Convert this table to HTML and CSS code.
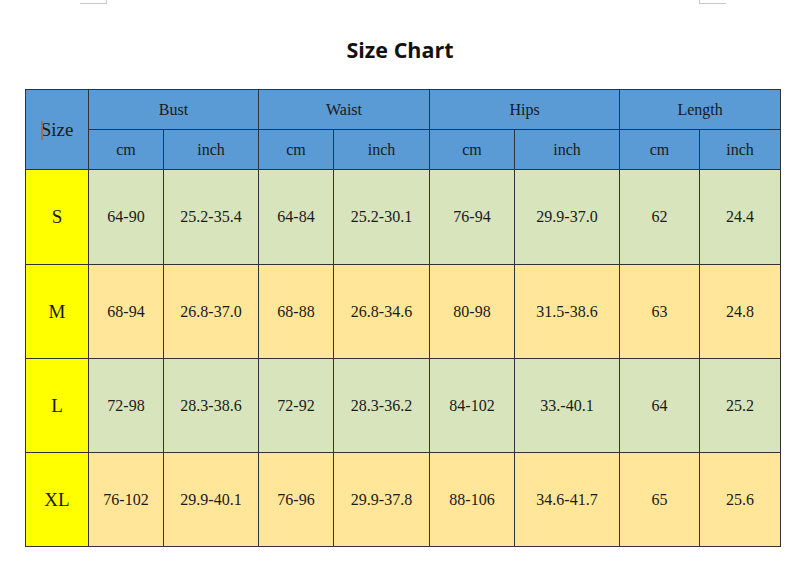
FILE: index.html
```html
<!DOCTYPE html>
<html lang="en">
<head>
<meta charset="utf-8">
<title>Size Chart</title>
<link rel="stylesheet" href="styles.css">
</head>
<body>
<div class="marks">
  <span class="mark mark-left"></span>
  <span class="mark mark-right"></span>
</div>
<h1 class="title">Size Chart</h1>
<table class="chart">
  <colgroup>
    <col class="c-size">
    <col class="c-75"><col class="c-95">
    <col class="c-75"><col class="c-96">
    <col class="c-85"><col class="c-105">
    <col class="c-80"><col class="c-81">
  </colgroup>
  <thead>
    <tr class="hrow">
      <th rowspan="2" class="size-head"><span class="caret"></span>Size</th>
      <th colspan="2">Bust</th>
      <th colspan="2">Waist</th>
      <th colspan="2">Hips</th>
      <th colspan="2">Length</th>
    </tr>
    <tr class="hrow">
      <th>cm</th><th>inch</th>
      <th>cm</th><th>inch</th>
      <th>cm</th><th>inch</th>
      <th>cm</th><th>inch</th>
    </tr>
  </thead>
  <tbody>
    <tr class="drow drow-first green">
      <td class="sz">S</td>
      <td>64-90</td><td>25.2-35.4</td>
      <td>64-84</td><td>25.2-30.1</td>
      <td>76-94</td><td>29.9-37.0</td>
      <td>62</td><td>24.4</td>
    </tr>
    <tr class="drow orange">
      <td class="sz">M</td>
      <td>68-94</td><td>26.8-37.0</td>
      <td>68-88</td><td>26.8-34.6</td>
      <td>80-98</td><td>31.5-38.6</td>
      <td>63</td><td>24.8</td>
    </tr>
    <tr class="drow green">
      <td class="sz">L</td>
      <td>72-98</td><td>28.3-38.6</td>
      <td>72-92</td><td>28.3-36.2</td>
      <td>84-102</td><td>33.-40.1</td>
      <td>64</td><td>25.2</td>
    </tr>
    <tr class="drow orange">
      <td class="sz">XL</td>
      <td>76-102</td><td>29.9-40.1</td>
      <td>76-96</td><td>29.9-37.8</td>
      <td>88-106</td><td>34.6-41.7</td>
      <td>65</td><td>25.6</td>
    </tr>
  </tbody>
</table>
</body>
</html>
```

FILE: styles.css
```css
html, body {
  margin: 0;
  padding: 0;
  background: #ffffff;
}

body {
  width: 800px;
  height: 563px;
  overflow: hidden;
}

.marks {
  display: flex;
  justify-content: space-between;
  padding: 0 74px 0 80px;
  height: 4px;
}

.mark {
  display: block;
  width: 26px;
  height: 3px;
  border-bottom: 1px solid #c8c8c8;
}

.mark-left {
  border-right: 1px solid #c8c8c8;
}

.mark-right {
  border-left: 1px solid #c8c8c8;
}

.title {
  margin: 31px 0 0 0;
  height: 30px;
  line-height: 30px;
  text-align: center;
  font-family: "Open Sans", "Noto Sans", sans-serif;
  font-weight: 700;
  font-size: 21.5px;
  color: #111111;
}

.chart {
  margin: 24px 0 0 25px;
  border-collapse: collapse;
  table-layout: fixed;
  width: 756px;
  font-family: "Liberation Serif", "Times New Roman", serif;
  color: #1a1a1a;
}

.c-size { width: 63px; }
.c-75 { width: 75px; }
.c-95 { width: 95px; }
.c-96 { width: 96px; }
.c-85 { width: 85px; }
.c-105 { width: 105px; }
.c-80 { width: 80px; }
.c-81 { width: 81px; }

.chart th,
.chart td {
  border: 1px solid #333333;
  padding: 0;
  text-align: center;
  vertical-align: middle;
  font-weight: 400;
  font-size: 16px;
}

.hrow th {
  background: #5b9bd5;
  height: 39px;
}

.chart th.size-head {
  font-size: 19px;
}

.caret {
  display: inline-block;
  width: 2px;
  height: 19px;
  margin-right: -2px;
  vertical-align: -4px;
  background: #a0704a;
  position: relative;
  z-index: 1;
}

.drow td {
  height: 93px;
}

.drow-first td {
  height: 94px;
}

.green td {
  background: #d8e4bc;
}

.orange td {
  background: #ffe699;
}

.drow td.sz {
  background: #ffff00;
  font-size: 19px;
}
```
